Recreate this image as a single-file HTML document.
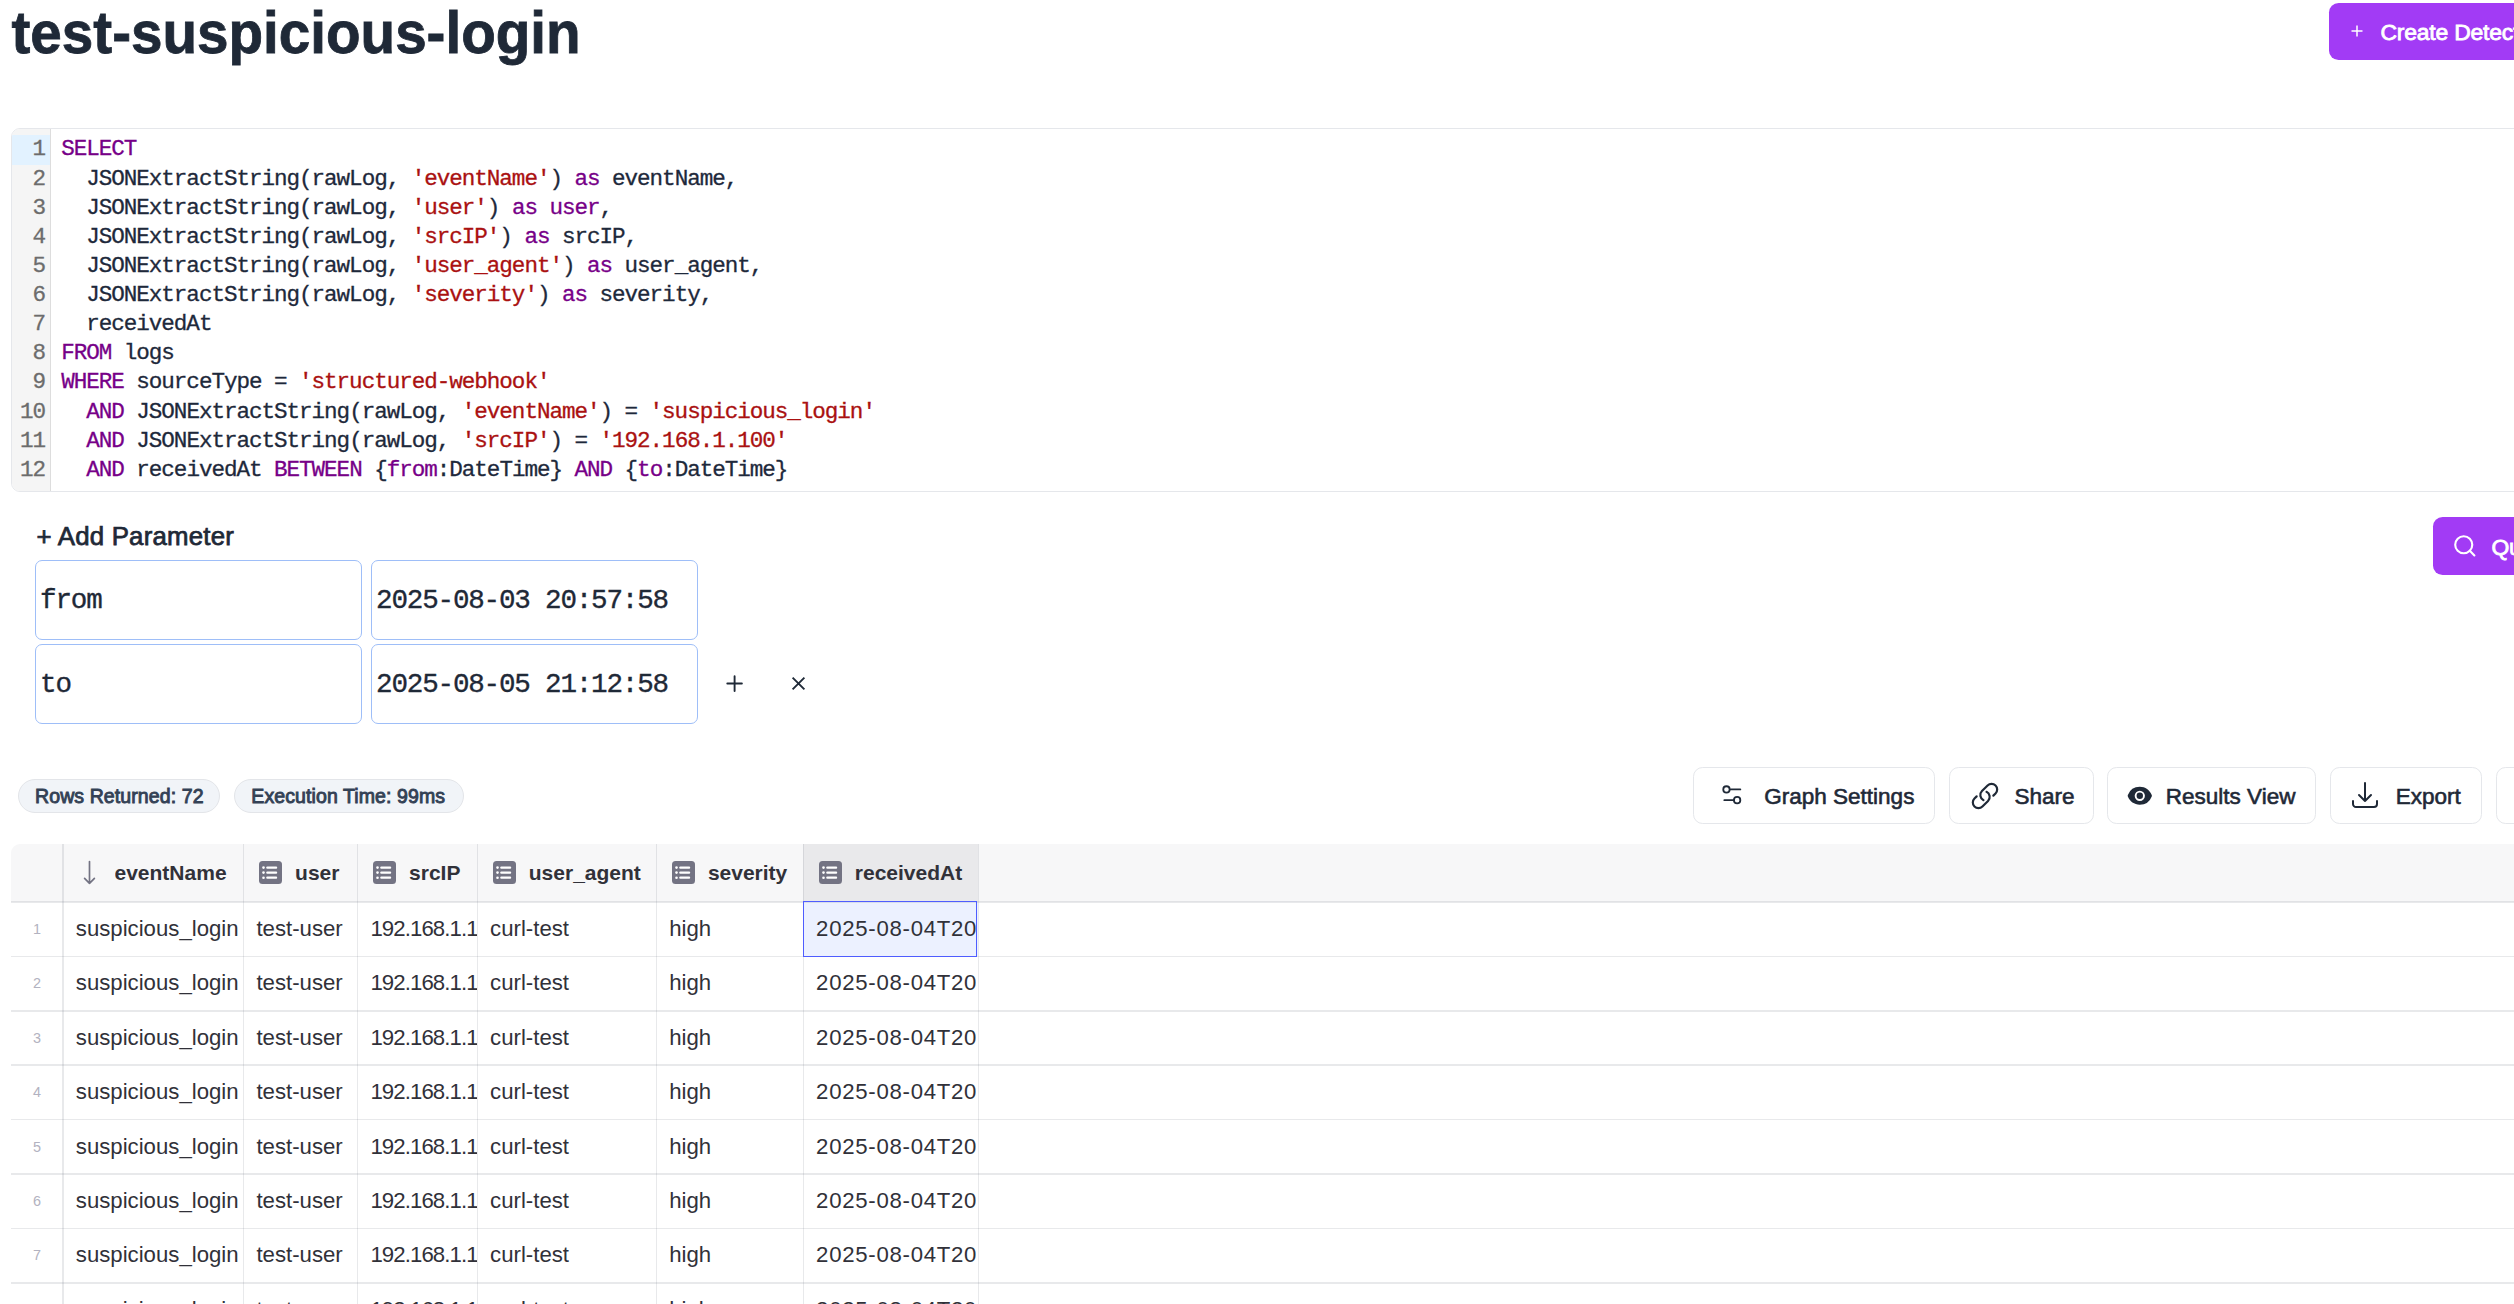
<!DOCTYPE html>
<html><head><meta charset="utf-8">
<style>
*{box-sizing:border-box;margin:0;padding:0}
html,body{width:2514px;height:1304px;overflow:hidden;background:#fff}
body{position:relative;font-family:"Liberation Sans",sans-serif;color:#1f2937}
.abs{position:absolute}
.title{left:11.5px;top:-1.3px;font-size:56.6px;-webkit-text-stroke:0.8px #1f2937;transform:scaleY(1.05);transform-origin:0 52.5px;font-weight:bold;line-height:70px;white-space:nowrap;color:#1f2937}
.btnp{background:#a23bf5;border-radius:9.6px;color:#fff;font-weight:bold;white-space:nowrap}
/* editor */
.editor{left:11px;top:128px;width:2600px;height:364px;border:1px solid #e5e7eb;border-radius:9px;overflow:hidden;background:#fff}
.gutter{position:absolute;left:0;top:0;bottom:0;width:38.8px;background:#f5f5f5;border-right:1.6px solid #ddd}
.ln{position:absolute;right:4.8px;font-family:"Liberation Mono",monospace;font-size:22.6px;letter-spacing:-1px;-webkit-text-stroke-width:0.3px;color:#6c6c6c;text-align:right;line-height:29.12px}
.act{position:absolute;left:0;width:38px;height:29.12px;background:#e2f2ff}
.code{position:absolute;left:49.2px;top:6.4px;font-family:"Liberation Mono",monospace;font-size:22.6px;line-height:29.12px;color:#1e293b;white-space:pre;letter-spacing:-1.04px;-webkit-text-stroke-width:0.3px}
.k{color:#770088}.s{color:#aa1111}
/* params */
.inp{position:absolute;border:1.6px solid #9ebef8;-webkit-text-stroke-width:0.35px;border-radius:7px;font-family:"Liberation Mono",monospace;font-size:27.6px;letter-spacing:-1.2px;color:#1f2937;white-space:pre;line-height:80px;padding-left:3.8px}
.pill{position:absolute;top:779px;height:34px;border:1px solid #e3e5e9;background:#f1f4f8;border-radius:17px;color:#334155;font-size:19.5px;-webkit-text-stroke:0.9px #334155;letter-spacing:0.1px;line-height:33.6px;white-space:nowrap}
.ab{position:absolute;top:767.3px;height:56.5px;border:1.6px solid #e5e7eb;border-radius:9.6px;background:#fff;white-space:nowrap;font-size:22.5px;-webkit-text-stroke:0.6px #1f2937;color:#1f2937}
.ab span{position:absolute;top:1.8px;line-height:53.3px}
.ab svg{position:absolute}
/* table */
.hd{height:58px;line-height:58px;font-weight:bold;font-size:21px;color:#313139;white-space:nowrap;overflow:hidden}
.cell{height:54.4px;line-height:54.4px;font-size:22.2px;color:#313139;white-space:nowrap;overflow:hidden}
.rm{height:54.4px;line-height:54.4px;font-size:14.4px;color:#b2b2c0;text-align:center}
</style></head><body>

<div class="abs title">test-suspicious-login</div>

<div class="abs btnp" style="left:2329px;top:3px;width:260px;height:57px">
  <svg class="abs" style="left:22px;top:22px" width="12" height="12" viewBox="0 0 12 12"><path d="M6 0.5V11.5M0.5 6H11.5" stroke="#fff" stroke-width="1.5"/></svg>
  <span class="abs" style="left:51.5px;top:0.9px;line-height:57px;font-weight:normal;font-size:22.9px;-webkit-text-stroke:0.8px #fff;letter-spacing:-0.2px">Create Detection</span>
</div>

<div class="abs editor">
  <div class="gutter">
    <div class="act" style="top:6.4px"></div>
    <div class="ln" style="top:6.4px">1<br>2<br>3<br>4<br>5<br>6<br>7<br>8<br>9<br>10<br>11<br>12</div>
  </div>
  <div class="code"><span class="k">SELECT</span>
  JSONExtractString(rawLog, <span class="s">'eventName'</span>) <span class="k">as</span> eventName,
  JSONExtractString(rawLog, <span class="s">'user'</span>) <span class="k">as</span> <span class="k">user</span>,
  JSONExtractString(rawLog, <span class="s">'srcIP'</span>) <span class="k">as</span> srcIP,
  JSONExtractString(rawLog, <span class="s">'user_agent'</span>) <span class="k">as</span> user_agent,
  JSONExtractString(rawLog, <span class="s">'severity'</span>) <span class="k">as</span> severity,
  receivedAt
<span class="k">FROM</span> logs
<span class="k">WHERE</span> sourceType = <span class="s">'structured-webhook'</span>
  <span class="k">AND</span> JSONExtractString(rawLog, <span class="s">'eventName'</span>) = <span class="s">'suspicious_login'</span>
  <span class="k">AND</span> JSONExtractString(rawLog, <span class="s">'srcIP'</span>) = <span class="s">'192.168.1.100'</span>
  <span class="k">AND</span> receivedAt <span class="k">BETWEEN</span> {<span class="k">from</span>:DateTime} <span class="k">AND</span> {<span class="k">to</span>:DateTime}</div>
</div>

<div class="abs" style="left:36.5px;top:519.2px;font-size:25.8px;-webkit-text-stroke:0.75px #1f2937;letter-spacing:0.22px;line-height:34px;white-space:nowrap;color:#1f2937">+ Add Parameter</div>

<div class="inp" style="left:35.3px;top:560.3px;width:326.4px;height:80px">from</div>
<div class="inp" style="left:371.3px;top:560.3px;width:326.4px;height:80px">2025-08-03 20:57:58</div>
<div class="inp" style="left:35.3px;top:643.5px;width:326.4px;height:80px">to</div>
<div class="inp" style="left:371.3px;top:643.5px;width:326.4px;height:80px">2025-08-05 21:12:58</div>
<svg class="abs" style="left:726px;top:675.3px" width="17" height="17" viewBox="0 0 17 17"><path d="M8.6 1.3V16M1.3 8.5H15.9" stroke="#1f2937" stroke-width="1.9" stroke-linecap="round"/></svg>
<svg class="abs" style="left:790px;top:675.3px" width="17" height="17" viewBox="0 0 17 17"><path d="M2.6 2.6L14.4 14.4M14.4 2.6L2.6 14.4" stroke="#1f2937" stroke-width="1.9" stroke-linecap="butt"/></svg>

<div class="abs btnp" style="left:2433px;top:517px;width:200px;height:58px">
  <svg class="abs" style="left:19px;top:16px" width="25.6" height="25.6" viewBox="0 0 24 24" fill="none" stroke="#fff" stroke-width="2" stroke-linecap="round"><circle cx="11" cy="11" r="8"/><path d="m21 21-4.3-4.3"/></svg>
  <span class="abs" style="left:58.5px;top:0.9px;line-height:58px;font-weight:normal;font-size:22.9px;-webkit-text-stroke:0.8px #fff;letter-spacing:-0.2px">Query</span>
</div>

<div class="pill" style="left:18px;width:202.4px"><span class="abs" style="left:16px">Rows Returned: 72</span></div>
<div class="pill" style="left:234.3px;width:230.1px"><span class="abs" style="left:16px">Execution Time: 99ms</span></div>

<div class="ab" style="left:1693.3px;width:242.2px">
  <svg style="left:24.5px;top:13.5px" width="25.6" height="25.6" viewBox="0 0 24 24" fill="none" stroke="#1f2937" stroke-width="1.7" stroke-linecap="round"><path d="M20 7h-9M14 17H5"/><circle cx="17" cy="17" r="3"/><circle cx="7" cy="7" r="3"/></svg>
  <span style="left:70px">Graph Settings</span>
</div>
<div class="ab" style="left:1949.4px;width:144.3px">
  <svg style="left:20px;top:13px" width="30" height="30" viewBox="0 0 24 24" fill="none" stroke="#1f2937" stroke-width="1.75" stroke-linecap="round" stroke-linejoin="round"><path d="M13.19 8.688a4.5 4.5 0 0 1 1.242 7.244l-4.5 4.5a4.5 4.5 0 0 1-6.364-6.364l1.757-1.757m13.35-.622 1.757-1.757a4.5 4.5 0 0 0-6.364-6.364l-4.5 4.5a4.5 4.5 0 0 0 1.242 7.244"/></svg>
  <span style="left:64px">Share</span>
</div>
<div class="ab" style="left:2107.3px;width:209.1px">
  <svg style="left:18.5px;top:15px" width="25.6" height="25.6" viewBox="0 0 20 20" fill="#1f2937"><path d="M10 12.5a2.5 2.5 0 1 0 0-5 2.5 2.5 0 0 0 0 5Z"/><path fill-rule="evenodd" d="M.664 10.59a1.651 1.651 0 0 1 0-1.186A10.004 10.004 0 0 1 10 3c4.257 0 7.893 2.66 9.336 6.41.147.381.146.804 0 1.186A10.004 10.004 0 0 1 10 17c-4.257 0-7.893-2.66-9.336-6.41ZM14 10a4 4 0 1 1-8 0 4 4 0 0 1 8 0Z"/></svg>
  <span style="left:57.5px">Results View</span>
</div>
<div class="ab" style="left:2330.3px;width:152.2px">
  <svg style="left:18px;top:11px" width="32" height="32" viewBox="0 0 24 24" fill="none" stroke="#1f2937" stroke-width="1.5" stroke-linecap="round" stroke-linejoin="round"><path d="M3 16.5v2.25A2.25 2.25 0 0 0 5.25 21h13.5A2.25 2.25 0 0 0 21 18.75V16.5M16.5 12 12 16.5m0 0L7.5 12m4.5 4.5V3"/></svg>
  <span style="left:64.5px">Export</span>
</div>
<div class="ab" style="left:2496.4px;width:200px"></div>

<div class="abs" style="left:11px;top:844px;width:2553px;height:58px;background:#f7f7f8;border-top-left-radius:9px"></div>
<div class="abs" style="left:803.3px;top:844px;width:175.20000000000005px;height:58px;background:#e9e9eb"></div>
<div class="abs" style="left:803.3px;top:902px;width:175.20000000000005px;height:54.4px;background:#ecf1ff"></div>
<div class="abs" style="left:11px;top:901px;width:2514px;height:1.6px;background:rgba(115,116,131,0.16)"></div>
<div class="abs" style="left:11px;top:955.6px;width:2514px;height:1.6px;background:rgba(115,116,131,0.16)"></div>
<div class="abs" style="left:11px;top:1010.0px;width:2514px;height:1.6px;background:rgba(115,116,131,0.16)"></div>
<div class="abs" style="left:11px;top:1064.4px;width:2514px;height:1.6px;background:rgba(115,116,131,0.16)"></div>
<div class="abs" style="left:11px;top:1118.8px;width:2514px;height:1.6px;background:rgba(115,116,131,0.16)"></div>
<div class="abs" style="left:11px;top:1173.2px;width:2514px;height:1.6px;background:rgba(115,116,131,0.16)"></div>
<div class="abs" style="left:11px;top:1227.6px;width:2514px;height:1.6px;background:rgba(115,116,131,0.16)"></div>
<div class="abs" style="left:11px;top:1282.0px;width:2514px;height:1.6px;background:rgba(115,116,131,0.16)"></div>
<div class="abs" style="left:11px;top:1336.4px;width:2514px;height:1.6px;background:rgba(115,116,131,0.16)"></div>
<div class="abs" style="left:62.2px;top:844px;width:1.6px;height:460px;background:rgba(115,116,131,0.16)"></div>
<div class="abs" style="left:242.8px;top:844px;width:1.6px;height:460px;background:rgba(115,116,131,0.16)"></div>
<div class="abs" style="left:356.8px;top:844px;width:1.6px;height:460px;background:rgba(115,116,131,0.16)"></div>
<div class="abs" style="left:476.5px;top:844px;width:1.6px;height:460px;background:rgba(115,116,131,0.16)"></div>
<div class="abs" style="left:655.6px;top:844px;width:1.6px;height:460px;background:rgba(115,116,131,0.16)"></div>
<div class="abs" style="left:802.5px;top:844px;width:1.6px;height:460px;background:rgba(115,116,131,0.16)"></div>
<div class="abs" style="left:977.7px;top:844px;width:1.6px;height:460px;background:rgba(115,116,131,0.16)"></div>
<svg class="abs" style="left:82px;top:860px" width="15" height="25" viewBox="0 0 15 25"><path d="M7.5 1.5V23.3M2.6 18.3L7.5 23.3L12.4 18.3" fill="none" stroke="#737383" stroke-width="1.7" stroke-linecap="round" stroke-linejoin="round"/></svg>
<div class="abs hd" style="left:114.5px;top:844px;width:128.6px">eventName</div>
<svg class="abs" style="left:259.2px;top:861px" width="23" height="23" viewBox="0 0 23 23"><rect x="0" y="0" width="23" height="23" rx="3.5" fill="#737383"/><g fill="#fff"><circle cx="4.5" cy="6.6" r="1.3"/><circle cx="4.5" cy="11.6" r="1.3"/><circle cx="4.5" cy="16.7" r="1.3"/><rect x="7.2" y="5.45" width="11" height="2.3" rx="1.1"/><rect x="7.2" y="10.45" width="11" height="2.3" rx="1.1"/><rect x="7.2" y="15.55" width="11" height="2.3" rx="1.1"/></g></svg>
<div class="abs hd" style="left:295.1px;top:844px;width:62.0px">user</div>
<svg class="abs" style="left:373.2px;top:861px" width="23" height="23" viewBox="0 0 23 23"><rect x="0" y="0" width="23" height="23" rx="3.5" fill="#737383"/><g fill="#fff"><circle cx="4.5" cy="6.6" r="1.3"/><circle cx="4.5" cy="11.6" r="1.3"/><circle cx="4.5" cy="16.7" r="1.3"/><rect x="7.2" y="5.45" width="11" height="2.3" rx="1.1"/><rect x="7.2" y="10.45" width="11" height="2.3" rx="1.1"/><rect x="7.2" y="15.55" width="11" height="2.3" rx="1.1"/></g></svg>
<div class="abs hd" style="left:409.1px;top:844px;width:67.7px">srcIP</div>
<svg class="abs" style="left:492.9px;top:861px" width="23" height="23" viewBox="0 0 23 23"><rect x="0" y="0" width="23" height="23" rx="3.5" fill="#737383"/><g fill="#fff"><circle cx="4.5" cy="6.6" r="1.3"/><circle cx="4.5" cy="11.6" r="1.3"/><circle cx="4.5" cy="16.7" r="1.3"/><rect x="7.2" y="5.45" width="11" height="2.3" rx="1.1"/><rect x="7.2" y="10.45" width="11" height="2.3" rx="1.1"/><rect x="7.2" y="15.55" width="11" height="2.3" rx="1.1"/></g></svg>
<div class="abs hd" style="left:528.8px;top:844px;width:127.1px">user_agent</div>
<svg class="abs" style="left:672.0px;top:861px" width="23" height="23" viewBox="0 0 23 23"><rect x="0" y="0" width="23" height="23" rx="3.5" fill="#737383"/><g fill="#fff"><circle cx="4.5" cy="6.6" r="1.3"/><circle cx="4.5" cy="11.6" r="1.3"/><circle cx="4.5" cy="16.7" r="1.3"/><rect x="7.2" y="5.45" width="11" height="2.3" rx="1.1"/><rect x="7.2" y="10.45" width="11" height="2.3" rx="1.1"/><rect x="7.2" y="15.55" width="11" height="2.3" rx="1.1"/></g></svg>
<div class="abs hd" style="left:707.9px;top:844px;width:94.9px">severity</div>
<svg class="abs" style="left:818.9px;top:861px" width="23" height="23" viewBox="0 0 23 23"><rect x="0" y="0" width="23" height="23" rx="3.5" fill="#737383"/><g fill="#fff"><circle cx="4.5" cy="6.6" r="1.3"/><circle cx="4.5" cy="11.6" r="1.3"/><circle cx="4.5" cy="16.7" r="1.3"/><rect x="7.2" y="5.45" width="11" height="2.3" rx="1.1"/><rect x="7.2" y="10.45" width="11" height="2.3" rx="1.1"/><rect x="7.2" y="15.55" width="11" height="2.3" rx="1.1"/></g></svg>
<div class="abs hd" style="left:854.8px;top:844px;width:123.2px">receivedAt</div>
<div class="abs rm" style="left:11px;top:902.0px;width:52px">1</div>
<div class="abs cell" style="left:75.8px;top:902.0px;width:167.8px;">suspicious_login</div>
<div class="abs cell" style="left:256.4px;top:902.0px;width:101.2px;">test-user</div>
<div class="abs cell" style="left:370.4px;top:902.0px;width:106.9px;letter-spacing:-0.9px;">192.168.1.100</div>
<div class="abs cell" style="left:490.1px;top:902.0px;width:166.3px;">curl-test</div>
<div class="abs cell" style="left:669.2px;top:902.0px;width:134.1px;">high</div>
<div class="abs cell" style="left:816.1px;top:902.0px;width:159.8px;letter-spacing:0.72px;">2025-08-04T20:57:58.000Z</div>
<div class="abs rm" style="left:11px;top:956.4px;width:52px">2</div>
<div class="abs cell" style="left:75.8px;top:956.4px;width:167.8px;">suspicious_login</div>
<div class="abs cell" style="left:256.4px;top:956.4px;width:101.2px;">test-user</div>
<div class="abs cell" style="left:370.4px;top:956.4px;width:106.9px;letter-spacing:-0.9px;">192.168.1.100</div>
<div class="abs cell" style="left:490.1px;top:956.4px;width:166.3px;">curl-test</div>
<div class="abs cell" style="left:669.2px;top:956.4px;width:134.1px;">high</div>
<div class="abs cell" style="left:816.1px;top:956.4px;width:159.8px;letter-spacing:0.72px;">2025-08-04T20:57:58.000Z</div>
<div class="abs rm" style="left:11px;top:1010.8px;width:52px">3</div>
<div class="abs cell" style="left:75.8px;top:1010.8px;width:167.8px;">suspicious_login</div>
<div class="abs cell" style="left:256.4px;top:1010.8px;width:101.2px;">test-user</div>
<div class="abs cell" style="left:370.4px;top:1010.8px;width:106.9px;letter-spacing:-0.9px;">192.168.1.100</div>
<div class="abs cell" style="left:490.1px;top:1010.8px;width:166.3px;">curl-test</div>
<div class="abs cell" style="left:669.2px;top:1010.8px;width:134.1px;">high</div>
<div class="abs cell" style="left:816.1px;top:1010.8px;width:159.8px;letter-spacing:0.72px;">2025-08-04T20:57:58.000Z</div>
<div class="abs rm" style="left:11px;top:1065.2px;width:52px">4</div>
<div class="abs cell" style="left:75.8px;top:1065.2px;width:167.8px;">suspicious_login</div>
<div class="abs cell" style="left:256.4px;top:1065.2px;width:101.2px;">test-user</div>
<div class="abs cell" style="left:370.4px;top:1065.2px;width:106.9px;letter-spacing:-0.9px;">192.168.1.100</div>
<div class="abs cell" style="left:490.1px;top:1065.2px;width:166.3px;">curl-test</div>
<div class="abs cell" style="left:669.2px;top:1065.2px;width:134.1px;">high</div>
<div class="abs cell" style="left:816.1px;top:1065.2px;width:159.8px;letter-spacing:0.72px;">2025-08-04T20:57:58.000Z</div>
<div class="abs rm" style="left:11px;top:1119.6px;width:52px">5</div>
<div class="abs cell" style="left:75.8px;top:1119.6px;width:167.8px;">suspicious_login</div>
<div class="abs cell" style="left:256.4px;top:1119.6px;width:101.2px;">test-user</div>
<div class="abs cell" style="left:370.4px;top:1119.6px;width:106.9px;letter-spacing:-0.9px;">192.168.1.100</div>
<div class="abs cell" style="left:490.1px;top:1119.6px;width:166.3px;">curl-test</div>
<div class="abs cell" style="left:669.2px;top:1119.6px;width:134.1px;">high</div>
<div class="abs cell" style="left:816.1px;top:1119.6px;width:159.8px;letter-spacing:0.72px;">2025-08-04T20:57:58.000Z</div>
<div class="abs rm" style="left:11px;top:1174.0px;width:52px">6</div>
<div class="abs cell" style="left:75.8px;top:1174.0px;width:167.8px;">suspicious_login</div>
<div class="abs cell" style="left:256.4px;top:1174.0px;width:101.2px;">test-user</div>
<div class="abs cell" style="left:370.4px;top:1174.0px;width:106.9px;letter-spacing:-0.9px;">192.168.1.100</div>
<div class="abs cell" style="left:490.1px;top:1174.0px;width:166.3px;">curl-test</div>
<div class="abs cell" style="left:669.2px;top:1174.0px;width:134.1px;">high</div>
<div class="abs cell" style="left:816.1px;top:1174.0px;width:159.8px;letter-spacing:0.72px;">2025-08-04T20:57:58.000Z</div>
<div class="abs rm" style="left:11px;top:1228.4px;width:52px">7</div>
<div class="abs cell" style="left:75.8px;top:1228.4px;width:167.8px;">suspicious_login</div>
<div class="abs cell" style="left:256.4px;top:1228.4px;width:101.2px;">test-user</div>
<div class="abs cell" style="left:370.4px;top:1228.4px;width:106.9px;letter-spacing:-0.9px;">192.168.1.100</div>
<div class="abs cell" style="left:490.1px;top:1228.4px;width:166.3px;">curl-test</div>
<div class="abs cell" style="left:669.2px;top:1228.4px;width:134.1px;">high</div>
<div class="abs cell" style="left:816.1px;top:1228.4px;width:159.8px;letter-spacing:0.72px;">2025-08-04T20:57:58.000Z</div>
<div class="abs rm" style="left:11px;top:1282.8px;width:52px">8</div>
<div class="abs cell" style="left:75.8px;top:1282.8px;width:167.8px;">suspicious_login</div>
<div class="abs cell" style="left:256.4px;top:1282.8px;width:101.2px;">test-user</div>
<div class="abs cell" style="left:370.4px;top:1282.8px;width:106.9px;letter-spacing:-0.9px;">192.168.1.100</div>
<div class="abs cell" style="left:490.1px;top:1282.8px;width:166.3px;">curl-test</div>
<div class="abs cell" style="left:669.2px;top:1282.8px;width:134.1px;">high</div>
<div class="abs cell" style="left:816.1px;top:1282.8px;width:159.8px;letter-spacing:0.72px;">2025-08-04T20:57:58.000Z</div>
<div class="abs" style="left:803.0px;top:901px;width:174.0px;height:55.9px;border:1.8px solid #4f5dff"></div>

</body></html>
